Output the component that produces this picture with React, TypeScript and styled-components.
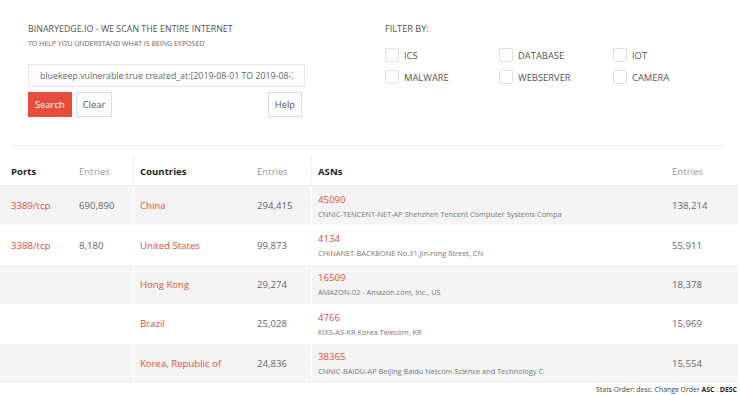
import styled, { createGlobalStyle } from 'styled-components'

const GlobalStyle = createGlobalStyle`
  html, body {
    margin: 0;
    padding: 0;
    background: #fff;
    font-family: 'Open Sans', 'Noto Sans', sans-serif;
    color: #666;
  }
  * {
    box-sizing: border-box;
  }
`

const Page = styled.div`
  width: 740px;
  height: 395px;
  overflow: hidden;
`

const Top = styled.div`
  display: flex;
  padding: 22px 0 0 28px;
  height: 145px;
`

const SearchCol = styled.div`
  width: 277px;
  display: flex;
  flex-direction: column;
`

const Title = styled.div`
  font-size: 8.9px;
  color: #555;
  line-height: 14px;
`

const Subtitle = styled.div`
  font-size: 7px;
  color: #666;
  margin-top: 3px;
  line-height: 10px;
`

const Input = styled.input`
  margin-top: 15px;
  width: 277px;
  height: 23px;
  border: 1px solid #e6e6e6;
  padding: 0 11px 0 11px;
  font-family: inherit;
  font-size: 8.8px;
  color: #666;
  outline: none;
`

const Buttons = styled.div`
  display: flex;
  gap: 4px;
  margin-top: 5px;
  padding-right: 3px;
`

const Button = styled.button<{ $primary?: boolean }>`
  height: 25px;
  padding: 0 6px;
  font-family: inherit;
  font-size: 9.4px;
  border: 1px solid ${(p) => (p.$primary ? '#e74c3c' : '#ddd')};
  background: ${(p) => (p.$primary ? '#e74c3c' : '#fff')};
  color: ${(p) => (p.$primary ? '#fff' : '#555')};
  cursor: pointer;
`

const Spacer = styled.div`
  flex: 1;
`

const FilterCol = styled.div`
  margin-left: 80px;
  display: flex;
  flex-direction: column;
`

const FilterTitle = styled.div`
  font-size: 9.2px;
  color: #555;
  line-height: 14px;
`

const FilterGrid = styled.div`
  display: grid;
  grid-template-columns: 114px 114px 114px;
  row-gap: 8px;
  margin-top: 12px;
`

const FilterItem = styled.label`
  display: flex;
  align-items: center;
  gap: 5px;
  font-size: 9.4px;
  color: #555;
`

const Box = styled.span`
  width: 14px;
  height: 14px;
  border: 1px solid #e0e0e0;
  border-radius: 2px;
  background: #fff;
`

const Divider = styled.div`
  margin: 0 16px 0 11px;
  border-top: 1px solid #ececec;
  height: 11px;
`

const Table = styled.div`
  width: 738px;
  display: grid;
  grid-template-columns: 73px 60px 118px 60px 355px 72px;
`

const Cell = styled.div<{ $head?: boolean; $odd?: boolean; $sep?: boolean; $first?: boolean }>`
  height: ${(p) => (p.$head ? '30px' : '39.4px')};
  display: flex;
  flex-direction: column;
  justify-content: center;
  padding-left: ${(p) => (p.$first ? '11px' : '6px')};
  background: ${(p) => (p.$odd ? '#f4f4f4' : '#fff')};
  border-left: ${(p) => (p.$sep ? `1px solid ${p.$head ? '#eee' : '#fff'}` : 'none')};
  border-bottom: ${(p) => (p.$head ? '1px solid #eee' : 'none')};
  font-size: 9.6px;
  white-space: nowrap;
  overflow: hidden;
`

const HeadLabel = styled.span<{ $muted?: boolean }>`
  color: ${(p) => (p.$muted ? '#999' : '#222')};
  font-weight: ${(p) => (p.$muted ? 400 : 700)};
  font-size: 9.6px;
  padding-top: 2px;
`

const LinkText = styled.span`
  color: #e74c3c;
  font-size: 9.6px;
`

const Num = styled.span`
  color: #666;
  font-size: 9.6px;
`

const AsnDesc = styled.span`
  color: #777;
  font-size: 7.4px;
  margin-top: 3px;
`

const Footer = styled.div`
  text-align: right;
  padding: 2px 3px 0 0;
  font-size: 6.9px;
  color: #444;
  & b {
    color: #222;
  }
`

const filters = ['ICS', 'DATABASE', 'IOT', 'MALWARE', 'WEBSERVER', 'CAMERA']

const ports = [
  { port: '3389/tcp', n: '690,890' },
  { port: '3388/tcp', n: '8,180' },
]

const countries = [
  { name: 'China', n: '294,415' },
  { name: 'United States', n: '99,873' },
  { name: 'Hong Kong', n: '29,274' },
  { name: 'Brazil', n: '25,028' },
  { name: 'Korea, Republic of', n: '24,836' },
]

const asns = [
  { id: '45090', desc: 'CNNIC-TENCENT-NET-AP Shenzhen Tencent Computer Systems Compa', n: '138,214' },
  { id: '4134', desc: 'CHINANET-BACKBONE No.31,Jin-rong Street, CN', n: '55,911' },
  { id: '16509', desc: 'AMAZON-02 - Amazon.com, Inc., US', n: '18,378' },
  { id: '4766', desc: 'KIXS-AS-KR Korea Telecom, KR', n: '15,969' },
  { id: '38365', desc: 'CNNIC-BAIDU-AP Beijing Baidu Netcom Science and Technology C', n: '15,554' },
]

const App = () => {
  return (
    <Page>
      <GlobalStyle />
      <Top>
        <SearchCol>
          <Title>BINARYEDGE.IO - WE SCAN THE ENTIRE INTERNET</Title>
          <Subtitle>TO HELP YOU UNDERSTAND WHAT IS BEING EXPOSED</Subtitle>
          <Input defaultValue="bluekeep.vulnerable:true created_at:[2019-08-01 TO 2019-08-31]" />
          <Buttons>
            <Button $primary>Search</Button>
            <Button>Clear</Button>
            <Spacer />
            <Button>Help</Button>
          </Buttons>
        </SearchCol>
        <FilterCol>
          <FilterTitle>FILTER BY:</FilterTitle>
          <FilterGrid>
            {filters.map((f) => (
              <FilterItem key={f}>
                <Box />
                {f}
              </FilterItem>
            ))}
          </FilterGrid>
        </FilterCol>
      </Top>
      <Divider />
      <Table>
        <Cell $head $first>
          <HeadLabel>Ports</HeadLabel>
        </Cell>
        <Cell $head>
          <HeadLabel $muted>Entries</HeadLabel>
        </Cell>
        <Cell $head $sep>
          <HeadLabel>Countries</HeadLabel>
        </Cell>
        <Cell $head>
          <HeadLabel $muted>Entries</HeadLabel>
        </Cell>
        <Cell $head $sep>
          <HeadLabel>ASNs</HeadLabel>
        </Cell>
        <Cell $head>
          <HeadLabel $muted>Entries</HeadLabel>
        </Cell>
        {countries.map((c, i) => {
          const odd = i % 2 === 0
          const p = ports[i]
          const a = asns[i]
          return [
            <Cell key={`p${i}`} $odd={odd} $first>
              {p && <LinkText>{p.port}</LinkText>}
            </Cell>,
            <Cell key={`pn${i}`} $odd={odd}>
              {p && <Num>{p.n}</Num>}
            </Cell>,
            <Cell key={`c${i}`} $odd={odd} $sep>
              <LinkText>{c.name}</LinkText>
            </Cell>,
            <Cell key={`cn${i}`} $odd={odd}>
              <Num>{c.n}</Num>
            </Cell>,
            <Cell key={`a${i}`} $odd={odd} $sep>
              <LinkText>{a.id}</LinkText>
              <AsnDesc>{a.desc}</AsnDesc>
            </Cell>,
            <Cell key={`an${i}`} $odd={odd}>
              <Num>{a.n}</Num>
            </Cell>,
          ]
        })}
      </Table>
      <Footer>
        Stats Order: desc. Change Order <b>ASC</b> : <b>DESC</b>
      </Footer>
    </Page>
  )
}

export default App
